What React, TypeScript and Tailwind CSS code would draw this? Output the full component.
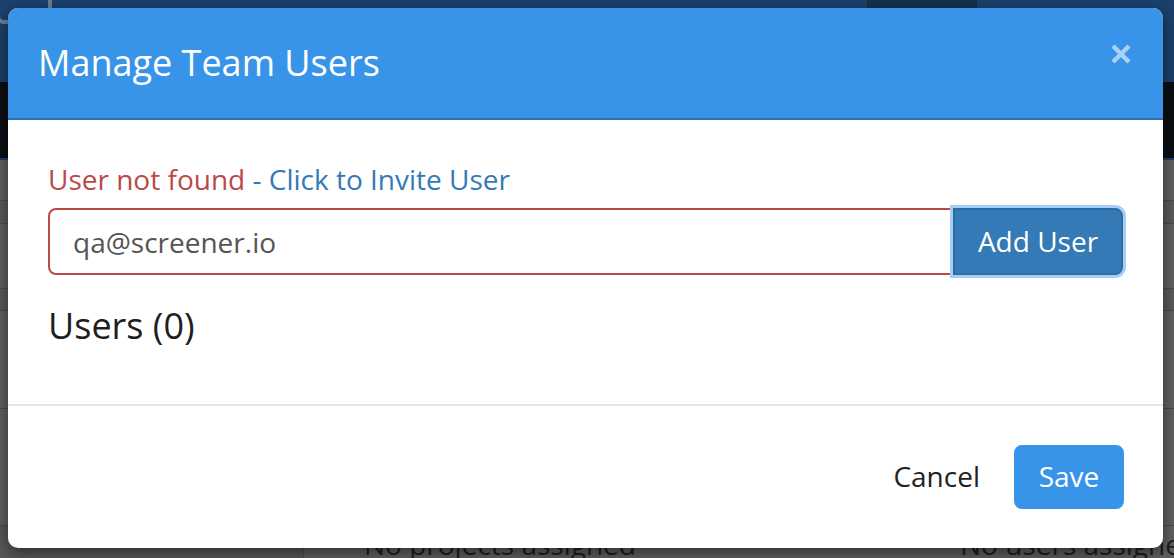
import React from "react";

export default function App() {
  const font = { fontFamily: '"Open Sans", "Liberation Sans", sans-serif' };
  return (
    <div className="relative w-[1174px] h-[558px] overflow-hidden bg-[#5f5f5f]" style={font}>
      {/* dimmed page behind */}
      <div className="flex flex-col w-full h-full">
        <div className="h-[85px] bg-[#1b416b] flex items-start relative">
          <div className="w-[56px] h-[30px] ml-[-4px] mt-[-6px] rounded-[8px] border-[4px] border-[#6e7f93]" />
          <div className="ml-[600px] text-[34px] text-[#5d7391] leading-none mt-[4px]">Dashboard</div>
          <div className="ml-[40px] w-[110px] h-full bg-[#13304f] text-[34px] text-[#5d7391] leading-none pt-[4px] pl-[26px]">T</div>
          <div className="ml-[110px] text-[34px] text-[#6f8197] leading-none mt-[4px]">De</div>
        </div>
        <div className="h-[78px] bg-[#0a0f13]" />
        <div className="h-[2px] bg-[#1e3f66]" />
        <div className="flex-1 flex flex-col bg-[#606060]">
          <div className="h-[40px]" />
          <div className="h-[1px] bg-[#4b4b4b]" />
          <div className="h-[22px] bg-[#5a5a5a]" />
          <div className="h-[1px] bg-[#4b4b4b]" />
          <div className="h-[64px]" />
          <div className="h-[1px] bg-[#4b4b4b]" />
          <div className="h-[21px] bg-[#5a5a5a]" />
          <div className="h-[1px] bg-[#4b4b4b]" />
          <div className="h-[97px]" />
          <div className="h-[1px] bg-[#4b4b4b]" />
          <div className="h-[116px]" />
          <div className="h-[1px] bg-[#4b4b4b]" />
          <div className="flex-1 flex">
            <div className="w-[304px] bg-[#585858] border-r border-[#4b4b4b]" />
            <div className="flex-1 pl-[60px] text-[28px] leading-none text-[#1e1e1e] pt-[4px]">No projects assigned</div>
            <div className="w-[214px] text-[28px] leading-none text-[#1e1e1e] pt-[4px] whitespace-nowrap">No users assigned</div>
          </div>
        </div>
      </div>

      {/* modal */}
      <div className="absolute left-[8px] top-[8px] w-[1155px] h-[540px] bg-white rounded-[10px] overflow-hidden shadow-[0_5px_15px_rgba(0,0,0,0.5)] flex flex-col">
        <div className="h-[112px] bg-[#3894e8] border-b-[2px] border-[#2f73b2] flex items-center justify-between pl-[30px] pr-[30px]">
          <h4 className="text-[36px] text-white leading-none">Manage Team Users</h4>
          <svg width="22" height="22" viewBox="0 0 22 22" className="mt-[-18px] mr-[1px]">
            <path d="M3 3 L19 19 M19 3 L3 19" stroke="#a9d1f6" strokeWidth="4.5" strokeLinecap="butt" />
          </svg>
        </div>
        <div className="h-[284px] px-[40px] pt-[39px] flex flex-col">
          <div className="h-[40px] flex items-center text-[28px] leading-none">
            <span className="text-[#b94a48]">User not found</span>
            <span className="text-[#337ab7] whitespace-pre"> - Click to Invite User</span>
          </div>
          <div className="mt-[9px] flex h-[67px]">
            <div className="flex-1 border-[2px] border-[#b94a48] rounded-l-[8px] flex items-center pl-[23px] text-[28px] text-[#555555]">
              qa@screener.io
            </div>
            <div className="w-[170px] rounded-r-[8px] bg-[#337ab7] border-[2px] border-[#2e6da4] shadow-[0_0_0_3px_#a6cdf5] flex items-center justify-center pb-[2px] text-[28px] text-white">
              Add User
            </div>
          </div>
          <h3 className="mt-[29px] h-[44px] flex items-center text-[36px] text-[#1f1f1f] leading-none">Users (0)</h3>
        </div>
        <div className="h-[2px] bg-[#e5e5e5]" />
        <div className="flex-1 flex items-center justify-end pr-[39px]">
          <span className="text-[28px] text-[#222222] mr-[34px] mb-[3px]">Cancel</span>
          <div className="w-[110px] h-[64px] rounded-[8px] bg-[#3894e8] flex items-center justify-center pb-[3px] text-[28px] text-white">
            Save
          </div>
        </div>
      </div>
    </div>
  );
}
